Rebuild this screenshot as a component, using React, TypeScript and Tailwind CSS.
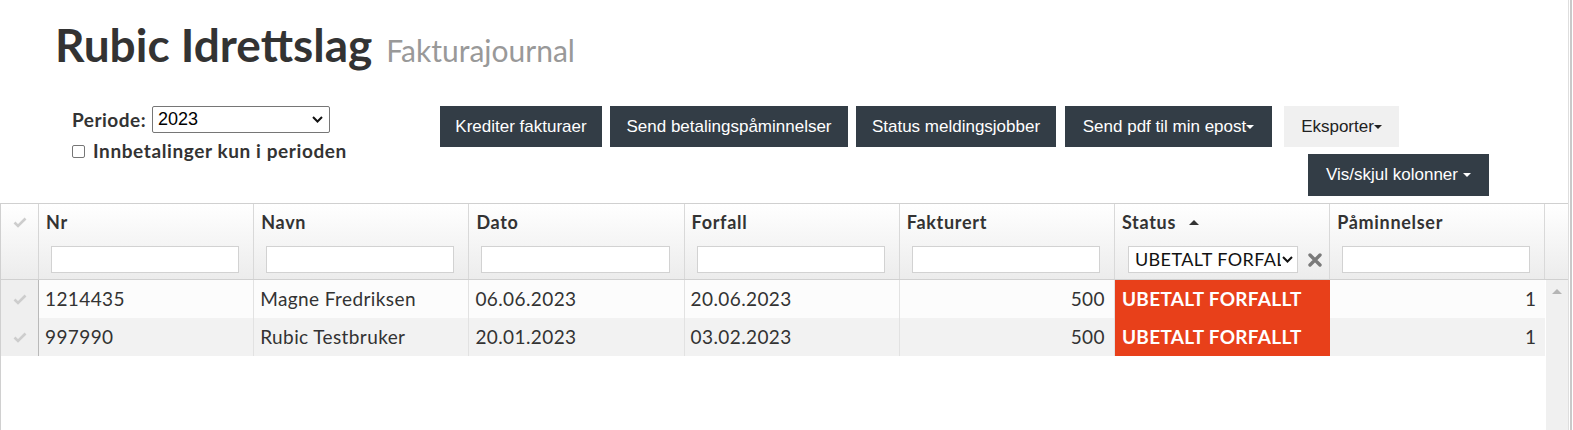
import React from 'react';

type Row = {
  nr: string;
  navn: string;
  dato: string;
  forfall: string;
  fakturert: string;
  status: string;
  paminnelser: string;
};

const rows: Row[] = [
  {
    nr: '1214435',
    navn: 'Magne Fredriksen',
    dato: '06.06.2023',
    forfall: '20.06.2023',
    fakturert: '500',
    status: 'UBETALT FORFALLT',
    paminnelser: '1',
  },
  {
    nr: '997990',
    navn: 'Rubic Testbruker',
    dato: '20.01.2023',
    forfall: '03.02.2023',
    fakturert: '500',
    status: 'UBETALT FORFALLT',
    paminnelser: '1',
  },
];

const textColumns = ['Nr', 'Navn', 'Dato', 'Forfall', 'Fakturert'];

function Caret({ dark }: { readonly dark?: boolean }) {
  return (
    <span
      className={`inline-block h-0 w-0 border-x-[4px] border-t-[4px] border-x-transparent align-middle ${
        dark ? 'border-t-[#222]' : 'border-t-white'
      }`}
    />
  );
}

function Chevron() {
  return (
    <svg width="11" height="7" viewBox="0 0 11 7" className="shrink-0">
      <polyline points="1,1 5.5,5.5 10,1" fill="none" stroke="#111" strokeWidth="2" />
    </svg>
  );
}

function Check() {
  return (
    <svg width="14" height="11" viewBox="0 0 14 11">
      <polyline points="1.5,5.5 5,9 12.5,1.5" fill="none" stroke="#cdcdcd" strokeWidth="2.6" />
    </svg>
  );
}

function DarkButton({ width, children }: { readonly width: string; readonly children: React.ReactNode }) {
  return (
    <button
      className={`flex h-[41px] ${width} items-center justify-center bg-[#333d46] font-['Liberation_Sans',Arial,sans-serif] text-[17px] text-white`}
    >
      {children}
    </button>
  );
}

function FilterInput() {
  return <div className="h-[27px] w-full border border-[#d2d2d2] bg-white" />;
}

export default function App() {
  return (
    <div className="flex h-[430px] overflow-hidden bg-white font-['Lato',sans-serif] text-[#333]">
      <div className="flex w-[1569px] shrink-0 flex-col border-r border-[#dedede]">
        {/* Title */}
        <h1 className="h-[70px] pl-[55px] pt-[19px] leading-[52px]">
          <span className="text-[46px] font-bold text-[#333]">Rubic Idrettslag</span>
          <span className="ml-[14px] text-[30px] text-[#999]">Fakturajournal</span>
        </h1>

        {/* Controls */}
        <div className="mt-[36px] flex items-start">
          <div className="w-[440px] shrink-0 pl-[72px]">
            <div className="flex items-center">
              <span className="w-[80px] text-[19px] font-bold leading-[26px] tracking-[0.5px]">Periode:</span>
              <div className="flex h-[27px] w-[178px] items-center justify-between rounded-[2px] border border-[#767676] pl-[5px] pr-[6px] font-['Liberation_Sans',Arial,sans-serif] text-[18px] text-black">
                <span>2023</span>
                <Chevron />
              </div>
            </div>
            <label className="mt-[8px] flex items-center gap-[8px]">
              <span className="h-[13px] w-[13px] rounded-[2px] border border-[#767676] bg-white" />
              <span className="text-[19px] font-bold leading-[20px] tracking-[0.6px]">Innbetalinger kun i perioden</span>
            </label>
          </div>

          <div className="flex flex-col">
            <div className="flex">
              <DarkButton width="w-[162px]">Krediter fakturaer</DarkButton>
              <div className="ml-[8px]">
                <DarkButton width="w-[238px]">Send betalingspåminnelser</DarkButton>
              </div>
              <div className="ml-[8px]">
                <DarkButton width="w-[200px]">Status meldingsjobber</DarkButton>
              </div>
              <div className="ml-[9px]">
                <DarkButton width="w-[207px]">
                  Send pdf til min epost
                  <Caret />
                </DarkButton>
              </div>
              <button className="ml-[12px] flex h-[41px] w-[115px] items-center justify-center bg-[#f0f0f0] font-['Liberation_Sans',Arial,sans-serif] text-[17px] text-[#222]">
                Eksporter
                <Caret dark />
              </button>
            </div>
            <div className="ml-[868px] mt-[7px]">
              <button className="flex h-[42px] w-[181px] items-center justify-center gap-[5px] bg-[#333d46] font-['Liberation_Sans',Arial,sans-serif] text-[17px] text-white">
                Vis/skjul kolonner
                <Caret />
              </button>
            </div>
          </div>
        </div>

        {/* Grid */}
        <div className="mt-[7px] flex flex-1 flex-col border-l border-t border-[#d0d0d0]">
          <div className="grid h-[76px] grid-cols-[38px_repeat(7,215.2px)_1fr] border-b border-[#d0d0d0] bg-linear-to-b from-white to-[#ececec]">
            <div className="flex justify-center border-r border-[#d6d6d6] pt-[13px]">
              <Check />
            </div>
            {textColumns.map((label) => (
              <div key={label} className="border-r border-[#d9d9d9]">
                <div className="pl-[7px] pt-[8px] text-[18px] font-bold leading-[20px] tracking-[0.7px]">{label}</div>
                <div className="mt-[14px] pl-[12px] pr-[14px]">
                  <FilterInput />
                </div>
              </div>
            ))}
            <div className="border-r border-[#d9d9d9]">
              <div className="flex items-center gap-[13px] pl-[7px] pt-[8px] text-[18px] font-bold leading-[20px] tracking-[0.7px]">
                Status
                <span className="h-0 w-0 border-x-[5.5px] border-b-[5px] border-x-transparent border-b-[#333]" />
              </div>
              <div className="mt-[14px] flex items-center pl-[13px]">
                <div className="flex h-[27px] w-[170px] items-center justify-between overflow-hidden border border-[#d2d2d2] bg-white pl-[6px] pr-[4px]">
                  <span className="w-[146px] overflow-hidden whitespace-nowrap text-[18px] tracking-[0.4px] text-[#111]">
                    UBETALT FORFALLT
                  </span>
                  <Chevron />
                </div>
                <svg width="14" height="14" viewBox="0 0 14 14" className="ml-[10px]">
                  <path d="M2 2 L12 12 M12 2 L2 12" stroke="#7a7a7a" strokeWidth="3.4" strokeLinecap="round" />
                </svg>
              </div>
            </div>
            <div className="border-r border-[#d9d9d9]">
              <div className="pl-[7px] pt-[8px] text-[18px] font-bold leading-[20px] tracking-[0.7px]">Påminnelser</div>
              <div className="mt-[14px] pl-[12px] pr-[14px]">
                <FilterInput />
              </div>
            </div>
            <div />
          </div>

          <div className="flex flex-1">
            <div className="w-[1544.4px] shrink-0">
              {rows.map((row, i) => (
                <div
                  key={row.nr}
                  className={`grid h-[38px] grid-cols-[38px_repeat(7,215.2px)] text-[19px] tracking-[0.4px] ${
                    i % 2 === 0 ? 'bg-[#fcfcfc]' : 'bg-[#f2f2f2]'
                  }`}
                >
                  <div className="flex items-center justify-center border-r border-[#b9b9b9] bg-[#efefef]">
                    <Check />
                  </div>
                  <div className="flex items-center border-r border-[#e2e2e2] px-[6px]">{row.nr}</div>
                  <div className="flex items-center border-r border-[#e2e2e2] px-[6px]">{row.navn}</div>
                  <div className="flex items-center border-r border-[#e2e2e2] px-[6px]">{row.dato}</div>
                  <div className="flex items-center border-r border-[#e2e2e2] px-[6px]">{row.forfall}</div>
                  <div className="flex items-center justify-end border-r border-[#e2e2e2] pr-[9px]">
                    {row.fakturert}
                  </div>
                  <div className="flex items-center bg-[#e8401a] pl-[7px] font-bold tracking-[0.3px] text-white">
                    {row.status}
                  </div>
                  <div className="flex items-center justify-end pr-[9px]">{row.paminnelser}</div>
                </div>
              ))}
            </div>
            <div className="ml-px flex flex-1 justify-center bg-[#f0f0f0] pt-[9px]">
              <span className="h-0 w-0 border-x-[5px] border-b-[5px] border-x-transparent border-b-[#b4b4b4]" />
            </div>
          </div>
        </div>
      </div>
      <div className="ml-px w-[2px] bg-[#c9c9c9]" />
    </div>
  );
}
